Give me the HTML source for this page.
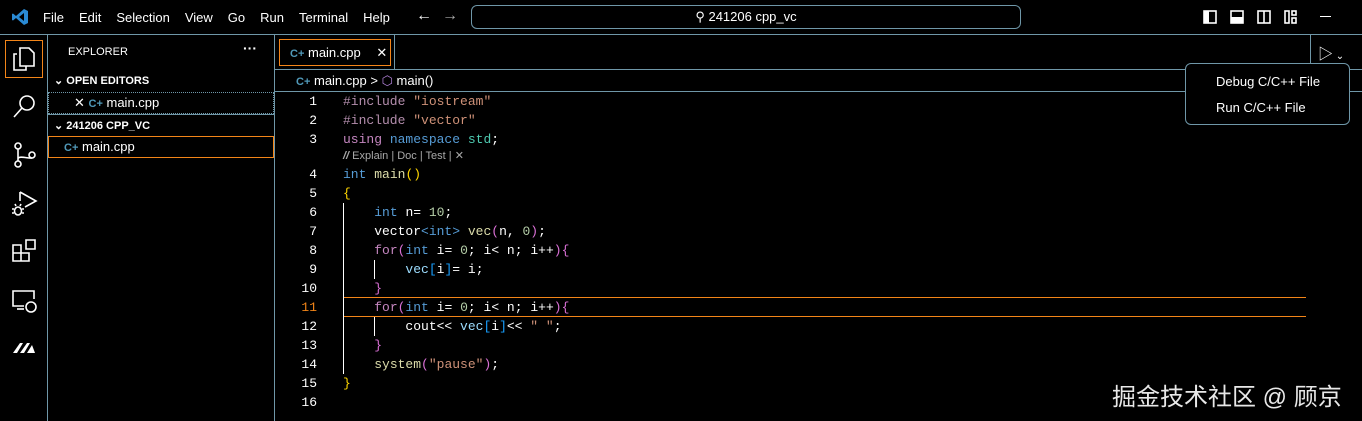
<!DOCTYPE html>
<html><head><meta charset="utf-8"><style>
*{margin:0;padding:0;box-sizing:border-box}
body{width:1362px;height:421px;background:#000;color:#fff;font-family:"Liberation Sans","Noto Sans CJK SC",sans-serif;position:relative;overflow:hidden;font-size:13px}
.a{position:absolute}
.menu span{margin-right:15px}
.code div{position:absolute;left:343px;height:19px;line-height:19px;white-space:pre;font-family:"Liberation Mono",monospace;font-size:13px}
.ln div{position:absolute;width:30px;left:287px;text-align:right;height:19px;line-height:19px;font-family:"Liberation Mono",monospace;font-size:13px;color:#fff}
.k{color:#c586c0}.t{color:#569cd6}.s{color:#ce9178}.n{color:#b5cea8}.v{color:#9cdcfe}.f{color:#dcdcaa}.y{color:#ffd700}.p{color:#da70d6}.q{color:#179fff}.g{color:#4ec9b0}.i{color:#b48ead}.w{color:#fff}
.ic{stroke:#fff;fill:none;stroke-width:1.6}
</style></head><body>
<svg class="a" style="left:11px;top:8px" width="18" height="18" viewBox="0 0 18 18"><path d="M13 1 L17 3 V15 L13 17 L5 10 L2 12.5 L1 12 V6 L2 5.5 L5 8 Z M13 5 L8 9 L13 13 Z" fill="#2a8ad4"/></svg>
<div class="a menu" style="left:43px;top:10px;font-size:13px"><span>File</span><span>Edit</span><span>Selection</span><span>View</span><span>Go</span><span>Run</span><span>Terminal</span><span>Help</span></div>
<div class="a" style="left:416px;top:7px;font-size:16px">&larr;</div>
<div class="a" style="left:442px;top:7px;font-size:16px;color:#aaa">&rarr;</div>
<div class="a" style="left:471px;top:5px;width:550px;height:24px;border:1px solid #6f97a8;border-radius:6px;text-align:center;line-height:22px;font-size:13px">&#9906; 241206 cpp_vc</div>
<svg class="a" style="left:1203px;top:10px" width="100" height="14"><rect x="1" y="1" width="12" height="12" class="ic"/><rect x="1" y="1" width="5" height="12" fill="#fff"/><rect x="28" y="1" width="12" height="12" class="ic"/><rect x="28" y="7" width="12" height="6" fill="#fff"/><rect x="55" y="1" width="12" height="12" class="ic"/><line x1="61" y1="1" x2="61" y2="13" class="ic"/><rect x="82" y="1" width="4" height="12" class="ic"/><rect x="89" y="1" width="4" height="4" class="ic"/><rect x="89" y="8" width="4" height="5" class="ic"/></svg>
<div class="a" style="left:1320px;top:16px;width:11px;height:1px;background:#fff"></div>
<div class="a" style="left:0;top:34px;width:1362px;height:1px;background:#6f97a8"></div>
<div class="a" style="left:47px;top:35px;width:1px;height:386px;background:#6f97a8"></div>
<div class="a" style="left:5px;top:40px;width:38px;height:38px;border:1px solid #f38518"></div>
<svg class="a" style="left:12px;top:46px" width="24" height="26"><path d="M5 8 H2 V24 H14 V20 M8 2 H17 L22 7 V20 H8 Z" class="ic" stroke-width="2"/></svg>
<svg class="a" style="left:12px;top:93px" width="26" height="26"><circle cx="15" cy="10" r="7" class="ic" stroke-width="2"/><line x1="10" y1="15" x2="2" y2="24" class="ic" stroke-width="2"/></svg>
<svg class="a" style="left:12px;top:142px" width="26" height="26"><circle cx="6" cy="4" r="3" class="ic" stroke-width="2"/><circle cx="6" cy="22" r="3" class="ic" stroke-width="2"/><circle cx="20" cy="13" r="3" class="ic" stroke-width="2"/><path d="M6 7 V19 M6 17 C6 13 18 17 20 16" class="ic" stroke-width="2"/></svg>
<svg class="a" style="left:11px;top:190px" width="28" height="28"><path d="M9 2 L25 11 L14 17 M9 2 V11" class="ic" stroke-width="2"/><ellipse cx="7" cy="21" rx="3.5" ry="4" class="ic" stroke-width="2"/><path d="M1 19 H3 M11 19 H13 M1 23 H3 M11 23 H13 M5 16 L4 14 M9 16 L10 14" class="ic"/></svg>
<svg class="a" style="left:11px;top:238px" width="28" height="28"><path d="M2 7 H10 V15 H2 Z M2 15 H10 V23 H2 Z M10 15 H18 V23 H10 Z M15 2 H24 V11 H15 Z" class="ic" stroke-width="2"/></svg>
<svg class="a" style="left:11px;top:288px" width="28" height="26"><path d="M13 18 H2 V3 H23 V11" class="ic" stroke-width="2"/><line x1="6" y1="21" x2="13" y2="21" class="ic" stroke-width="2"/><circle cx="20" cy="19" r="5" class="ic" stroke-width="2"/></svg>
<svg class="a" style="left:12px;top:339px" width="24" height="16"><path d="M1 14 L8 4 L11 4 L5 14 Z M8 14 L15 4 L18 4 L12 14 Z M15 14 L20 6 L23 14 Z" fill="#fff"/></svg>
<div class="a" style="left:274px;top:35px;width:1px;height:386px;background:#6f97a8"></div>
<div class="a" style="left:68px;top:46px;font-size:11px">EXPLORER</div>
<div class="a" style="left:243px;top:40px;font-size:14px;font-weight:bold">···</div>
<div class="a" style="left:54px;top:74px;font-size:11px;font-weight:bold">&#8964;&nbsp;OPEN EDITORS</div>
<div class="a" style="left:48px;top:92px;width:226px;height:22px;border:1px dotted #6f97a8"></div>
<div class="a" style="left:74px;top:95px;font-size:13px">✕ <span style="color:#519aba;font-size:11px;font-weight:bold">C+</span> main.cpp</div>
<div class="a" style="left:48px;top:114px;width:226px;height:1px;background:#6f97a8"></div>
<div class="a" style="left:54px;top:119px;font-size:11px;font-weight:bold">&#8964;&nbsp;241206 CPP_VC</div>
<div class="a" style="left:48px;top:136px;width:226px;height:22px;border:1px solid #f38518"></div>
<div class="a" style="left:64px;top:139px;font-size:13px"><span style="color:#519aba;font-size:11px;font-weight:bold">C+</span> main.cpp</div>
<div class="a" style="left:279px;top:39px;width:112px;height:27px;border:1px solid #f38518"></div>
<div class="a" style="left:290px;top:45px;font-size:13px"><span style="color:#519aba;font-size:11px;font-weight:bold">C+</span> main.cpp <span style="margin-left:12px">✕</span></div>
<div class="a" style="left:394px;top:35px;width:1px;height:34px;background:#6f97a8"></div>
<div class="a" style="left:275px;top:69px;width:1087px;height:1px;background:#6f97a8"></div>
<div class="a" style="left:275px;top:91px;width:1087px;height:1px;background:#6f97a8"></div>
<div class="a" style="left:1310px;top:35px;width:1px;height:34px;background:#6f97a8"></div>
<div class="a" style="left:1318px;top:43px;font-size:15px">▷<span style="font-size:10px"> ⌄</span></div>
<div class="a" style="left:296px;top:73px;font-size:13px"><span style="color:#519aba;font-size:11px;font-weight:bold">C+</span> main.cpp &gt; <span style="color:#b180d7">⬡</span> main()</div>
<div class="a" style="left:1185px;top:63px;width:165px;height:62px;background:#000;border:1px solid #6f97a8;border-radius:6px"></div>
<div class="a" style="left:1216px;top:74px;font-size:13px">Debug C/C++ File</div>
<div class="a" style="left:1216px;top:100px;font-size:13px">Run C/C++ File</div>
<div class="a" style="left:343px;top:297px;width:963px;height:20px;border-top:1px solid #f38518;border-bottom:1px solid #f38518"></div>
<div class="a" style="left:343px;top:203px;width:1px;height:171px;background:#fff"></div>
<div class="a" style="left:374px;top:260px;width:1px;height:19px;background:#fff"></div>
<div class="a" style="left:374px;top:317px;width:1px;height:19px;background:#fff"></div>
<div class="ln">
<div style="top:92px">1</div><div style="top:111px">2</div><div style="top:130px">3</div><div style="top:165px">4</div><div style="top:184px">5</div><div style="top:203px">6</div><div style="top:222px">7</div><div style="top:241px">8</div><div style="top:260px">9</div><div style="top:279px">10</div><div style="top:298px;color:#f38518">11</div><div style="top:317px">12</div><div style="top:336px">13</div><div style="top:355px">14</div><div style="top:374px">15</div><div style="top:393px">16</div>
</div>
<div class="code">
<div style="top:92px"><span class="i">#include</span> <span class="s">"iostream"</span></div>
<div style="top:111px"><span class="i">#include</span> <span class="s">"vector"</span></div>
<div style="top:130px"><span class="k">using</span> <span class="t">namespace</span> <span class="g">std</span>;</div>
<div style="top:147px;font-family:'Liberation Sans',sans-serif;font-size:11px;color:#aaa;line-height:18px"><b style="font-style:italic">//</b> Explain | Doc | Test | ✕</div>
<div style="top:165px"><span class="t">int</span> <span class="f">main</span><span class="y">()</span></div>
<div style="top:184px"><span class="y">{</span></div>
<div style="top:203px">    <span class="t">int</span> <span class="w">n</span>= <span class="n">10</span>;</div>
<div style="top:222px">    vector<span class="t">&lt;int&gt;</span> <span class="f">vec</span><span class="p">(</span><span class="w">n</span>, <span class="n">0</span><span class="p">)</span>;</div>
<div style="top:241px">    <span class="k">for</span><span class="p">(</span><span class="t">int</span> <span class="w">i</span>= <span class="n">0</span>; <span class="w">i</span>&lt; <span class="w">n</span>; <span class="w">i</span>++<span class="p">){</span></div>
<div style="top:260px">        <span class="v">vec</span><span class="q">[</span><span class="w">i</span><span class="q">]</span>= <span class="w">i</span>;</div>
<div style="top:279px">    <span class="p">}</span></div>
<div style="top:298px">    <span class="k">for</span><span class="p">(</span><span class="t">int</span> <span class="w">i</span>= <span class="n">0</span>; <span class="w">i</span>&lt; <span class="w">n</span>; <span class="w">i</span>++<span class="p">){</span></div>
<div style="top:317px">        cout&lt;&lt; <span class="v">vec</span><span class="q">[</span><span class="w">i</span><span class="q">]</span>&lt;&lt; <span class="s">" "</span>;</div>
<div style="top:336px">    <span class="p">}</span></div>
<div style="top:355px">    <span class="f">system</span><span class="p">(</span><span class="s">"pause"</span><span class="p">)</span>;</div>
<div style="top:374px"><span class="y">}</span></div>
</div>
<div class="a" style="left:1112px;top:377px;font-size:24px;color:#e8e8e8">掘金技术社区 @ 顾京</div>
</body></html>
